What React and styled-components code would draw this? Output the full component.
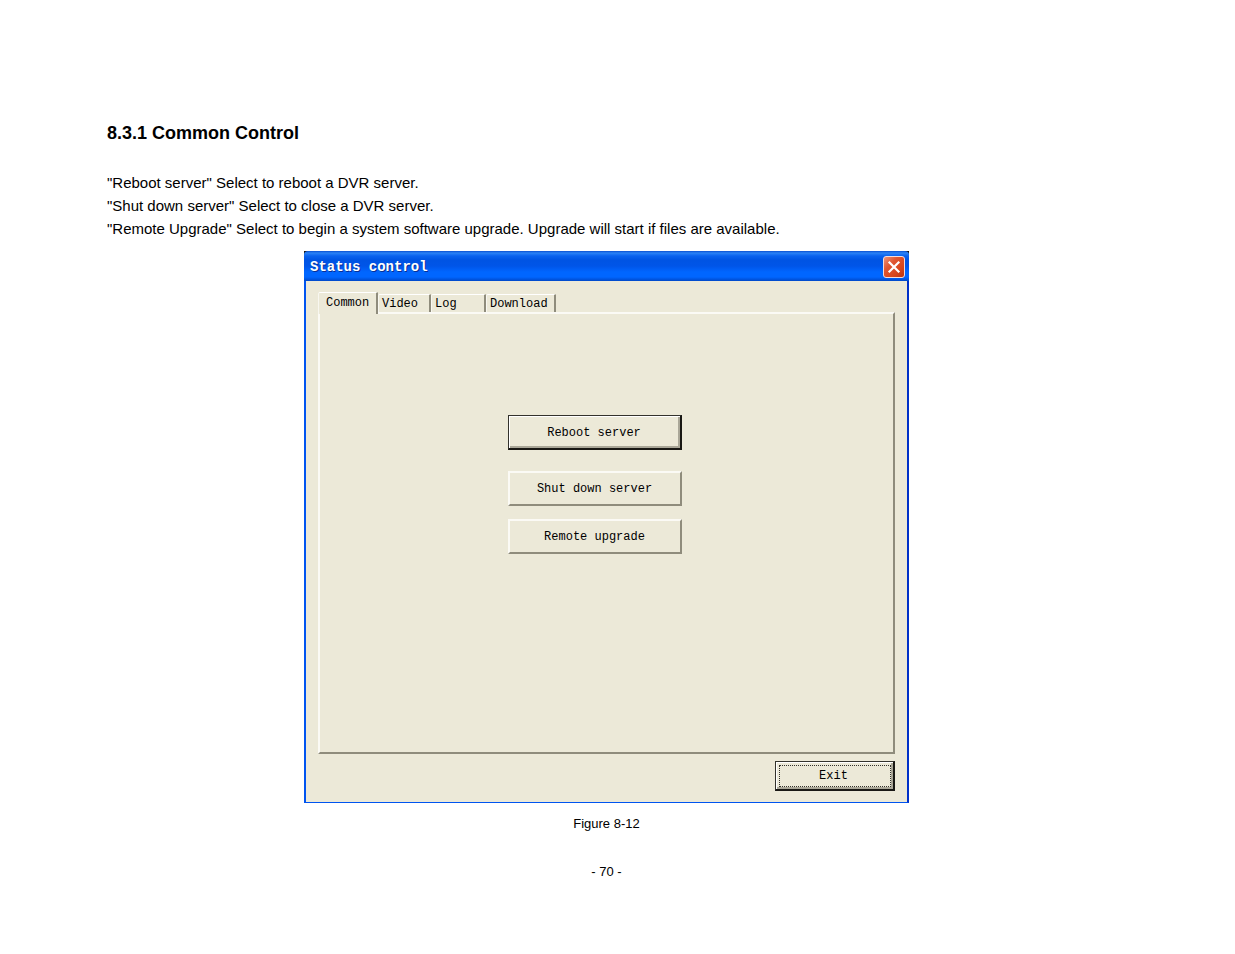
import React, { useState } from 'react';
import styled, { createGlobalStyle, css } from 'styled-components';

const GlobalStyle = createGlobalStyle`
  * {
    box-sizing: border-box;
  }

  body {
    margin: 0;
    background: #ffffff;
    color: #000000;
    font-family: 'Liberation Sans', Arial, sans-serif;
  }
`;

const mono = css`
  font-family: 'Liberation Mono', 'Courier New', monospace;
  font-size: 12px;
  line-height: 16px;
  color: #000000;
`;

const StyledPage = styled.main`
  padding: 121px 129px 0 107px;
`;

const StyledHeading = styled.h1`
  margin: 0 0 26px;
  font-size: 18px;
  line-height: 24px;
  font-weight: 700;
`;

const StyledText = styled.p`
  margin: 0;
  font-size: 15px;
  line-height: 23px;
`;

const StyledFigure = styled.figure`
  margin: 11px 0 0;
  display: flex;
  flex-direction: column;
  align-items: center;
`;

const StyledCaption = styled.figcaption`
  padding-top: 13px;
  font-size: 13px;
  line-height: 16px;
`;

const StyledPageNumber = styled.footer`
  padding-top: 32px;
  font-size: 13px;
  line-height: 16px;
  text-align: center;
`;

const StyledWindow = styled.section`
  width: 605px;
  max-width: 100%;
  background: #1c1408;
`;

const StyledTitleBar = styled.header`
  display: flex;
  align-items: center;
  justify-content: space-between;
  height: 30px;
  padding: 2px 4px 0 6px;
  border-radius: 4px 4px 0 0;
  background: linear-gradient(
    #0a4fd0 0,
    #2b83f6 2px,
    #0a62ee 5px,
    #0054e3 9px,
    #0055e8 15px,
    #0066ff 21px,
    #0066ff 26px,
    #0048c8 30px
  );
`;

const StyledTitle = styled.h2`
  ${mono}
  margin: 0;
  font-size: 14px;
  font-weight: 700;
  color: #ffffff;
  text-shadow: 1px 1px #0a2f94;
`;

const StyledClose = styled.button`
  display: flex;
  align-items: center;
  justify-content: center;
  width: 22px;
  height: 22px;
  padding: 0;
  border: 1px solid #f3dcdc;
  border-radius: 3px;
  background: linear-gradient(135deg, #ee9478 0, #df5632 35%, #d8461c 70%, #b93510 100%);
`;

const StyledBody = styled.div`
  padding: 11px 12px 11px 12px;
  border: solid;
  border-width: 0 2px 1px 2px;
  border-color: #0054f0 #0030c8 #0054f0 #0054f0;
  background: #ece9d8;
`;

const StyledTabs = styled.div`
  display: flex;
  align-items: flex-end;
  height: 20px;
`;

const StyledTab = styled.button`
  ${mono}
  width: ${({ $width }) => $width}px;
  height: ${({ $active }) => ($active ? 22 : 18)}px;
  margin-bottom: ${({ $active }) => ($active ? -2 : 0)}px;
  padding: ${({ $active }) => ($active ? '0 0 2px 7px' : '1px 0 0 3px')};
  border: solid;
  border-width: 1px 2px 0 1px;
  border-color: #ffffff #8f8c7c transparent #f8f7f0;
  border-radius: 2px 1px 0 0;
  background: #ece9d8;
  text-align: left;
  white-space: nowrap;
`;

const StyledPanel = styled.div`
  display: flex;
  flex-direction: column;
  align-items: flex-start;
  gap: 21px;
  min-height: 442px;
  padding: 101px 0 0 188px;
  border: 2px solid;
  border-color: #fbfaf5 #8f8c7c #8f8c7c #fbfaf5;
`;

const StyledButtonGroup = styled.div`
  display: grid;
  gap: 13px;
`;

const StyledButton = styled.button`
  ${mono}
  width: 174px;
  height: 35px;
  padding: 0 1px 0 0;
  border: 2px solid;
  border-color: #fbfaf5 #8f8c7c #8f8c7c #fbfaf5;
  background: #ece9d8;

  ${({ $default }) =>
    $default &&
    css`
      padding-top: 1px;
      border-width: 1px 2px 2px 1px;
      border-color: #33322c #191814 #191814 #33322c;
      box-shadow: inset 1px 1px #ffffff, inset -2px -2px #aaa798;
    `}
`;

const StyledActions = styled.div`
  display: flex;
  justify-content: flex-end;
  padding-top: 7px;
`;

const StyledExit = styled(StyledButton)`
  width: 120px;
  height: 30px;
  padding: 3px 2px 2px 3px;
`;

const StyledFocus = styled.span`
  display: flex;
  align-items: center;
  justify-content: center;
  height: 100%;
  padding-right: 3px;
  border: 1px dotted #33322c;
`;

const tabs = [
  { name: 'Common', width: 60 },
  { name: 'Video', width: 53 },
  { name: 'Log', width: 55 },
  { name: 'Download', width: 70 },
];

const CloseIcon = () => (
  <svg width="14" height="14" viewBox="0 0 14 14" aria-hidden="true">
    <path d="M2.5 2.5l9 9M11.5 2.5l-9 9" stroke="#ffffff" strokeWidth="2.2" strokeLinecap="square" />
  </svg>
);

const StatusWindow = () => {
  const [active, setActive] = useState('Common');

  return (
    <StyledWindow aria-label="Status control">
      <StyledTitleBar>
        <StyledTitle>Status control</StyledTitle>
        <StyledClose type="button" aria-label="Close">
          <CloseIcon />
        </StyledClose>
      </StyledTitleBar>
      <StyledBody>
        <StyledTabs role="tablist">
          {tabs.map(({ name, width }) => (
            <StyledTab
              key={name}
              type="button"
              role="tab"
              aria-selected={active === name}
              $active={active === name}
              $width={width}
              onClick={() => setActive(name)}
            >
              {name}
            </StyledTab>
          ))}
        </StyledTabs>
        <StyledPanel role="tabpanel">
          {active === 'Common' && (
            <>
              <StyledButton type="button" $default>
                Reboot server
              </StyledButton>
              <StyledButtonGroup>
                <StyledButton type="button">Shut down server</StyledButton>
                <StyledButton type="button">Remote upgrade</StyledButton>
              </StyledButtonGroup>
            </>
          )}
        </StyledPanel>
        <StyledActions>
          <StyledExit type="button" $default>
            <StyledFocus>Exit</StyledFocus>
          </StyledExit>
        </StyledActions>
      </StyledBody>
    </StyledWindow>
  );
};

const App = () => {
  return (
    <>
      <GlobalStyle />
      <StyledPage>
        <StyledHeading>8.3.1 Common Control</StyledHeading>
        <StyledText>&quot;Reboot server&quot; Select to reboot a DVR server.</StyledText>
        <StyledText>&quot;Shut down server&quot; Select to close a DVR server.</StyledText>
        <StyledText>
          &quot;Remote Upgrade&quot; Select to begin a system software upgrade. Upgrade will start if
          files are available.
        </StyledText>
        <StyledFigure>
          <StatusWindow />
          <StyledCaption>Figure 8-12</StyledCaption>
        </StyledFigure>
        <StyledPageNumber>- 70 -</StyledPageNumber>
      </StyledPage>
    </>
  );
};

export default App;
